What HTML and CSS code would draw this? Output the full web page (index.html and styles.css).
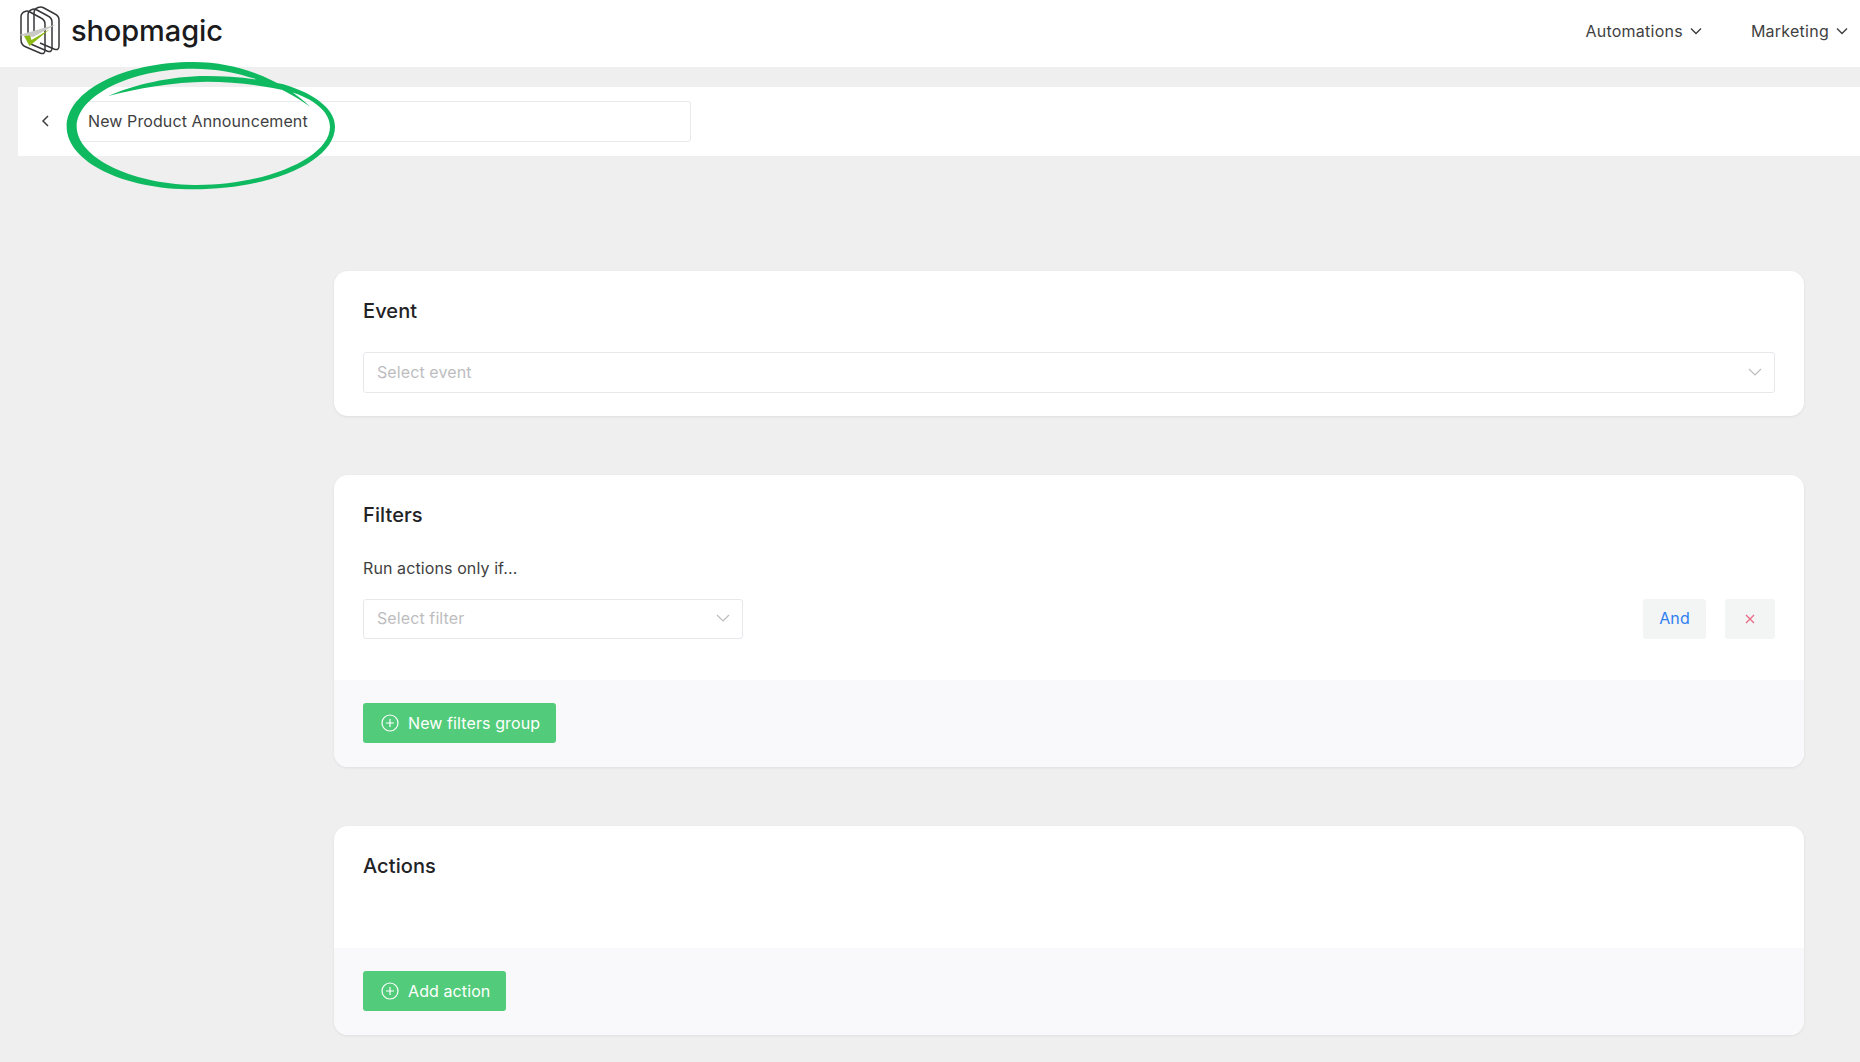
FILE: index.html
```html
<!DOCTYPE html>
<html lang="en">
<head>
<meta charset="utf-8">
<title>ShopMagic</title>
<link rel="stylesheet" href="styles.css">
</head>
<body>
<header class="topbar">
  <div class="brand">
    <svg class="logo" viewBox="20 6 40 50" aria-hidden="true">
      <g fill="none" stroke="#37373a" stroke-width="1.500" stroke-linejoin="round">
        <path d="M34 36 V13 Q34 9 38 7.500 Q41 6.500 43 7.500 L55 14 Q59 16 59 20 V46 Q59 51 54 49 L40 43"/>
        <path d="M28 38 V15 Q28 11 32 9.500 Q34 8.500 36 9.500 L48 16 Q52 18 52 22 V48 Q52 53 47 51 L33 45 Q28 43 28 38Z"/>
        <path d="M21 40 V17 Q21 13 25 11.500 Q27 10.500 29 11.500 L41 18 Q45 20 45 24 V50 Q45 55 40 53 L26 47 Q21 45 21 40Z"/>
      </g>
      <path d="M19 35 L56 24.500 L33 37Z" fill="#c9cac6"/>
      <path d="M24 36 L29.500 46 L50 29 L31.500 40 L30 35.500Z" fill="#8dbb16"/>
    </svg>
    <span class="wordmark">shopmagic</span>
  </div>
  <nav class="nav">
    <a class="nav-item">Automations <svg class="chev" viewBox="0 0 12 8"><path d="M1 1.500 L6 6.500 L11 1.500"/></svg></a>
    <a class="nav-item">Marketing <svg class="chev" viewBox="0 0 12 8"><path d="M1 1.500 L6 6.500 L11 1.500"/></svg></a>
  </nav>
</header>

<main class="main">
  <div class="subbar">
    <svg class="back" viewBox="0 0 8 12"><path d="M7 1 L2 6 L7 11"/></svg>
    <div class="name-input">New Product Announcement</div>
  </div>

  <div class="content">
    <section class="card">
      <div class="card-body card-event">
        <h2 class="card-title">Event</h2>
        <div class="select select-full">
          <span>Select event</span>
          <svg class="chev-light" viewBox="0 0 14 8"><path d="M1 1 L7 7 L13 1"/></svg>
        </div>
      </div>
    </section>

    <section class="card">
      <div class="card-body card-filters">
        <h2 class="card-title">Filters</h2>
        <p class="hint">Run actions only if...</p>
        <div class="filter-row">
          <div class="select select-filter">
            <span>Select filter</span>
            <svg class="chev-light" viewBox="0 0 14 8"><path d="M1 1 L7 7 L13 1"/></svg>
          </div>
          <div class="filter-actions">
            <button class="ghost ghost-and">And</button>
            <button class="ghost ghost-x"><svg class="x-icon" viewBox="0 0 10 10"><path d="M1 1 L9 9 M9 1 L1 9"/></svg></button>
          </div>
        </div>
      </div>
      <div class="card-foot">
        <button class="primary">
          <svg class="plus" viewBox="0 0 18 18"><circle cx="9" cy="9" r="8"/><path d="M9 5 V13 M5 9 H13"/></svg>
          New filters group
        </button>
      </div>
    </section>

    <section class="card">
      <div class="card-body card-actions">
        <h2 class="card-title">Actions</h2>
      </div>
      <div class="card-foot">
        <button class="primary">
          <svg class="plus" viewBox="0 0 18 18"><circle cx="9" cy="9" r="8"/><path d="M9 5 V13 M5 9 H13"/></svg>
          Add action
        </button>
      </div>
    </section>
  </div>
</main>

<svg class="scribble" viewBox="0 0 900 450" aria-hidden="true">
  <path d="M780 170 C720 110 590 36 430 36 C221 36 50 123 50 230 C50 333 216 418 430 418 C665 418 855 333 855 230 C855 175 790 130 700 103 C620 85 540 78 470 78 C360 78 250 105 175 138 C260 115 370 96 470 95 C560 95 650 108 720 125 C790 145 840 185 840 230 C840 325 640 408 430 405 C240 400 82 322 80 230 C80 138 240 56 430 56 C570 56 700 110 780 170Z"/>
</svg>
</body>
</html>
```

FILE: styles.css
```css
* { box-sizing: border-box; }
html, body { margin: 0; height: 100%; }
body {
  font-family: Inter, "Liberation Sans", sans-serif;
  font-size: 16px;
  letter-spacing: 0.1px;
  color: #3a3a3c;
  background: #efefef;
  overflow: hidden;
  position: relative;
}
.topbar {
  height: 67px;
  background: #fff;
  display: flex;
  align-items: center;
  justify-content: space-between;
  padding: 0 12px 6px 20px;
}
.brand { display: flex; align-items: center; gap: 11px; }
.logo { width: 40px; height: 50px; display: block; }
.wordmark { font-size: 29px; font-weight: 500; color: #1b1b1d; letter-spacing: -0.1px; }
.nav { display: flex; gap: 49px; }
.nav-item { display: flex; align-items: center; gap: 7px; font-size: 16px; letter-spacing: 0.25px; color: #3f3f42; }
.chev { width: 12px; height: 8px; fill: none; stroke: #3f3f42; stroke-width: 1.400; }
.main { padding: 20px 0 0 18px; }
.subbar {
  height: 69px;
  background: #fff;
  display: flex;
  align-items: center;
  padding-left: 23px;
}
.back { width: 8px; height: 12px; fill: none; stroke: #3f3f42; stroke-width: 1.500; margin: 0 24px 1px 0; }
.name-input {
  width: 618px;
  height: 41px;
  border: 1px solid #e9e9ec;
  border-radius: 3px;
  padding: 0 0 2px 14px;
  display: flex;
  align-items: center;
  color: #3f3f42;
}
.content {
  margin: 115px 56px 0 316px;
  display: flex;
  flex-direction: column;
  gap: 59px;
}
.card {
  background: #fff;
  border-radius: 14px;
  overflow: hidden;
  box-shadow: 0 1px 3px rgba(40, 40, 60, 0.08);
}
.card-body { padding: 0 29px; }
.card-title { margin: 0; font-size: 20px; font-weight: 500; color: #222225; line-height: 24px; letter-spacing: 0.1px; }
.card-event { height: 145px; padding-top: 28px; }
.card-filters { height: 205px; padding-top: 28px; }
.card-actions { height: 122px; padding-top: 28px; }
.hint { margin: 31px 0 0; line-height: 20px; color: #3f3f42; }
.select {
  height: 41px;
  border: 1px solid #e8e8ec;
  border-radius: 3px;
  display: flex;
  align-items: center;
  justify-content: space-between;
  padding: 0 12px 1px 13px;
  color: #bdbdc0;
}
.select-full { margin-top: 29px; }
.select-filter { width: 380px; height: 40px; padding: 0 12px 2px 13px; }
.chev-light { width: 14px; height: 8px; fill: none; stroke: #bdbdc0; stroke-width: 1.200; }
.filter-row { margin-top: 21px; display: flex; justify-content: space-between; }
.filter-actions { display: flex; gap: 19px; }
.ghost {
  height: 40px;
  border: 0;
  border-radius: 3px;
  background: #f3f4f4;
  font: inherit;
  letter-spacing: inherit;
  display: flex;
  align-items: center;
  justify-content: center;
  padding: 0;
}
.ghost-and { width: 63px; color: #2f7ff0; padding-bottom: 2px; }
.ghost-x { width: 50px; padding-bottom: 1px; }
.x-icon { width: 10px; height: 10px; fill: none; stroke: #ea6a85; stroke-width: 1.300; }
.card-foot { background: #f9f9fb; padding: 23px 29px 24px; }
.primary {
  height: 40px;
  border: 0;
  border-radius: 3px;
  background: #52cc7a;
  color: #fff;
  font: inherit;
  letter-spacing: inherit;
  display: inline-flex;
  align-items: center;
  gap: 9px;
  padding: 0 16px 1px 18px;
  vertical-align: top;
}
.plus { width: 18px; height: 18px; fill: none; stroke: #fff; stroke-width: 1.200; }
.scribble {
  position: absolute;
  left: 50px;
  top: 50px;
  width: 300px;
  height: 150px;
  fill: #0fb95f;
}
```
